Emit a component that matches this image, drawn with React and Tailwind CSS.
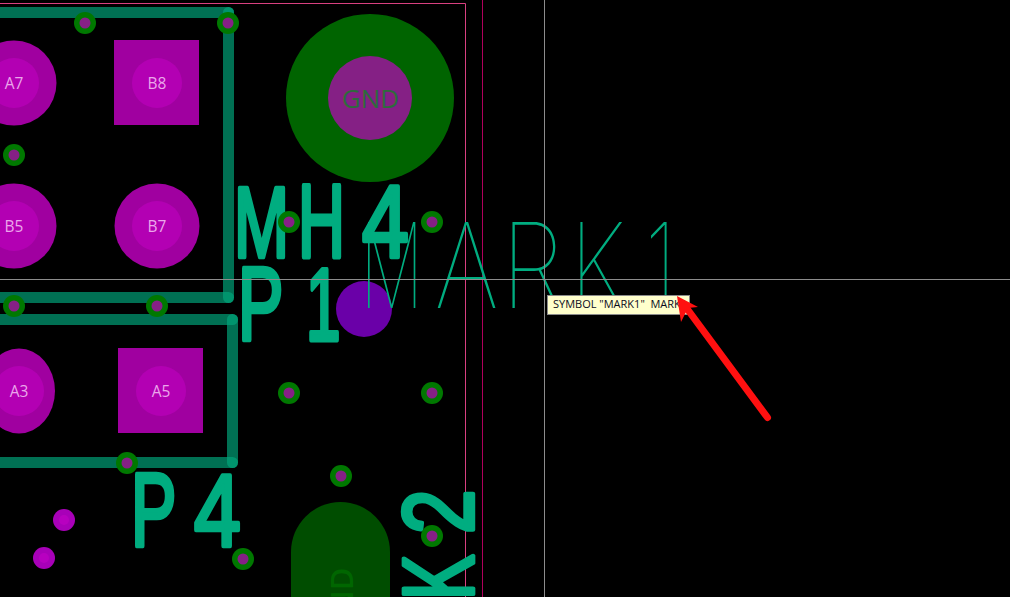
import React from 'react';

const SILK = '#00ad80';
const TRACE = '#00a57b';

const vias = [
  [85, 23], [228, 23], [14, 155], [14, 306], [157, 306], [127, 463],
  [289, 222], [432, 222], [289, 393], [432, 393], [341, 476], [243, 559], [432, 536],
];

const traces = [
  [0, 12.5, 228.5, 12.5],
  [228.5, 12.5, 228.5, 297.5],
  [0, 297.5, 228.5, 297.5],
  [0, 319.5, 232.5, 319.5],
  [232.5, 319.5, 232.5, 462.5],
  [0, 462.5, 232.5, 462.5],
];

// chunky silkscreen characters, each squeezed to its spot on the board
const silk = [
  { ch: 'M', x: 234, y: 257, sx: 0.66, sy: 1 },
  { ch: 'H', x: 298, y: 257, sx: 0.65, sy: 1.03 },
  { ch: '4', x: 362, y: 257, sx: 0.84, sy: 1.02 },
  { ch: 'P', x: 238, y: 340, sx: 0.68, sy: 1.03 },
  { ch: '1', x: 306, y: 340, sx: 0.62, sy: 1.02 },
  { ch: 'P', x: 131, y: 546, sx: 0.68, sy: 1.03 },
  { ch: '4', x: 194, y: 546, sx: 0.84, sy: 1.02 },
];

// thin outline characters of the symbol name
const mark = [
  { ch: 'M', x: 360, sx: 0.6 },
  { ch: 'A', x: 434.5, sx: 0.85 },
  { ch: 'R', x: 501, sx: 0.86 },
  { ch: 'K', x: 570, sx: 0.78 },
  { ch: '1', x: 645, sx: 0.72 },
];

const Pad = ({ cx, cy, label, square, oval }) => (
  <g>
    {square ? (
      <rect x={cx - 43} y={cy - 43} width={85} height={85} fill="#a000a0" />
    ) : (
      <ellipse cx={cx} cy={cy} rx={oval ? 36 : 42.5} ry={42.5} fill="#a000a0" />
    )}
    <circle cx={cx} cy={cy} r={25} fill="#b300b3" />
    <text x={cx} y={cy + 5.5} textAnchor="middle" fontSize={15.5} fill="#eba6eb" fontFamily="'Open Sans', sans-serif">
      {label}
    </text>
  </g>
);

const SilkText = ({ transform, children }) => (
  <text
    transform={transform}
    fontSize={100}
    fill={SILK}
    stroke={SILK}
    strokeWidth={4}
    strokeLinejoin="round"
    vectorEffect="non-scaling-stroke"
    fontFamily="'Liberation Sans', sans-serif"
  >
    {children}
  </text>
);

const App = () => {
  return (
    <div className="relative w-[1010px] h-[597px] overflow-hidden bg-black">
      <svg className="block w-full h-full" viewBox="0 0 1010 597">
        {/* board outline */}
        <path d="M0 3.5H465.5V597" fill="none" stroke="#d84080" />
        <path d="M482.5 0V597" stroke="#b0005c" />

        {/* traces */}
        {traces.map(([x1, y1, x2, y2], i) => (
          <line key={i} x1={x1} y1={y1} x2={x2} y2={y2} stroke={TRACE} strokeWidth={11} strokeLinecap="round" strokeOpacity={0.68} />
        ))}

        {/* pads */}
        <Pad cx={14} cy={83} label="A7" />
        <Pad cx={157} cy={83} label="B8" square />
        <Pad cx={14} cy={226} label="B5" />
        <Pad cx={157} cy={226} label="B7" />
        <Pad cx={19} cy={391} label="A3" oval />
        <Pad cx={161} cy={391} label="A5" square />

        <circle cx={64} cy={520} r={11} fill="#a800b8" />
        <circle cx={64} cy={520} r={5} fill="#b800c0" />
        <circle cx={44} cy={558} r={11} fill="#a800b8" />
        <circle cx={44} cy={558} r={5} fill="#b800c0" />

        {/* mounting hole */}
        <circle cx={370} cy={98} r={84} fill="#006400" />
        <circle cx={370} cy={98} r={42} fill="#852085" />
        <text x={370.5} y={107.5} textAnchor="middle" fontSize={26} fill="#2e6b3c" fontFamily="'Open Sans', sans-serif">GND</text>

        <circle cx={364} cy={309} r={28} fill="#6a00a8" />

        {/* bottom pad */}
        <path d="M291 597V552A49.5 50 0 0 1 390 552V597Z" fill="#004d00" />
        <text transform="translate(353 567.5) rotate(-90)" textAnchor="end" fontSize={31} fontWeight={600} fill="#006600" fontFamily="'Open Sans', sans-serif">GND</text>

        {/* symbol name */}
        {mark.map((g, i) => (
          <text
            key={i}
            transform={`translate(${g.x} 308) scale(${g.sx} 1)`}
            fontSize={118}
            fontWeight={100}
            fill={SILK}
            fontFamily="Inter, sans-serif"
          >
            {g.ch}
          </text>
        ))}

        {/* silkscreen */}
        {silk.map((g, i) => (
          <SilkText key={i} transform={`translate(${g.x} ${g.y}) scale(${g.sx} ${g.sy})`}>
            {g.ch}
          </SilkText>
        ))}
        <SilkText transform="translate(473 534) rotate(-90) scale(0.8 1)">2</SilkText>
        <SilkText transform="translate(473 600) rotate(-90) scale(0.68 1)">K</SilkText>

        {/* vias */}
        {vias.map(([cx, cy], i) => (
          <g key={i}>
            <circle cx={cx} cy={cy} r={11} fill="#007800" />
            <circle cx={cx} cy={cy} r={5.5} fill="#862086" />
          </g>
        ))}

        {/* crosshair */}
        <path d="M0 279.5H1010M544.5 0V597" stroke="#8c8c8c" />
      </svg>

      {/* tooltip */}
      <div className="absolute left-[547px] top-[295px] w-[143px] h-[20px] overflow-hidden border border-[#8a8a8a] bg-[#ffffcc] pl-[5px] text-[11px] leading-[16px] text-[#0c0c1c] whitespace-pre font-['Open_Sans',sans-serif]">
        {'SYMBOL "MARK1"  MARK1'}
      </div>

      {/* annotation arrow */}
      <svg className="absolute left-0 top-0 w-full h-full" viewBox="0 0 1010 597">
        <line x1={767.5} y1={417.5} x2={688} y2={310} stroke="#ff1010" strokeWidth={7} strokeLinecap="round" />
        <path d="M677 296L698 307L688 308L681 322Z" fill="#ff1010" />
      </svg>
    </div>
  );
};

export default App;
